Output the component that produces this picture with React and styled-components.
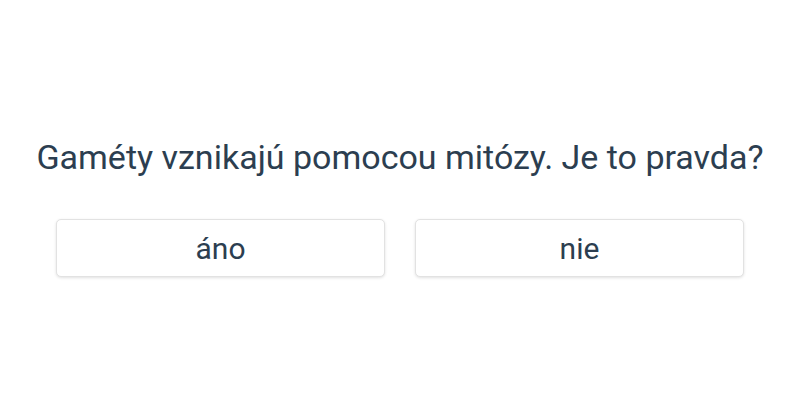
import React from 'react';
import styled, { createGlobalStyle } from 'styled-components';

const GlobalStyle = createGlobalStyle`
  html, body {
    margin: 0;
    padding: 0;
    background: #fff;
  }
  body {
    font-family: Roboto, "Liberation Sans", sans-serif;
    color: #2c3e50;
  }
`;

const Page = styled.div`
  width: 800px;
  height: 400px;
  display: flex;
  flex-direction: column;
  align-items: center;
  padding-top: 134px;
  box-sizing: border-box;
`;

const Question = styled.h1`
  margin: 0;
  font-size: 34px;
  font-weight: 400;
  line-height: 46px;
  text-align: center;
  white-space: nowrap;
`;

const Answers = styled.div`
  display: flex;
  gap: 30px;
  margin-top: 39px;
`;

const AnswerButton = styled.button`
  width: 329px;
  height: 58px;
  background: #fff;
  border: 1px solid #e2e2e2;
  border-radius: 5px;
  box-shadow: 0 1px 3px rgba(0, 0, 0, 0.12);
  font-family: inherit;
  font-size: 30px;
  color: #2c3e50;
  cursor: pointer;
  padding: 0;
`;

const answers = ['áno', 'nie'];

export default function App() {
  return (
    <>
      <GlobalStyle />
      <Page>
        <Question>Gaméty vznikajú pomocou mitózy. Je to pravda?</Question>
        <Answers>
          {answers.map(a => (
            <AnswerButton key={a}>{a}</AnswerButton>
          ))}
        </Answers>
      </Page>
    </>
  );
}
